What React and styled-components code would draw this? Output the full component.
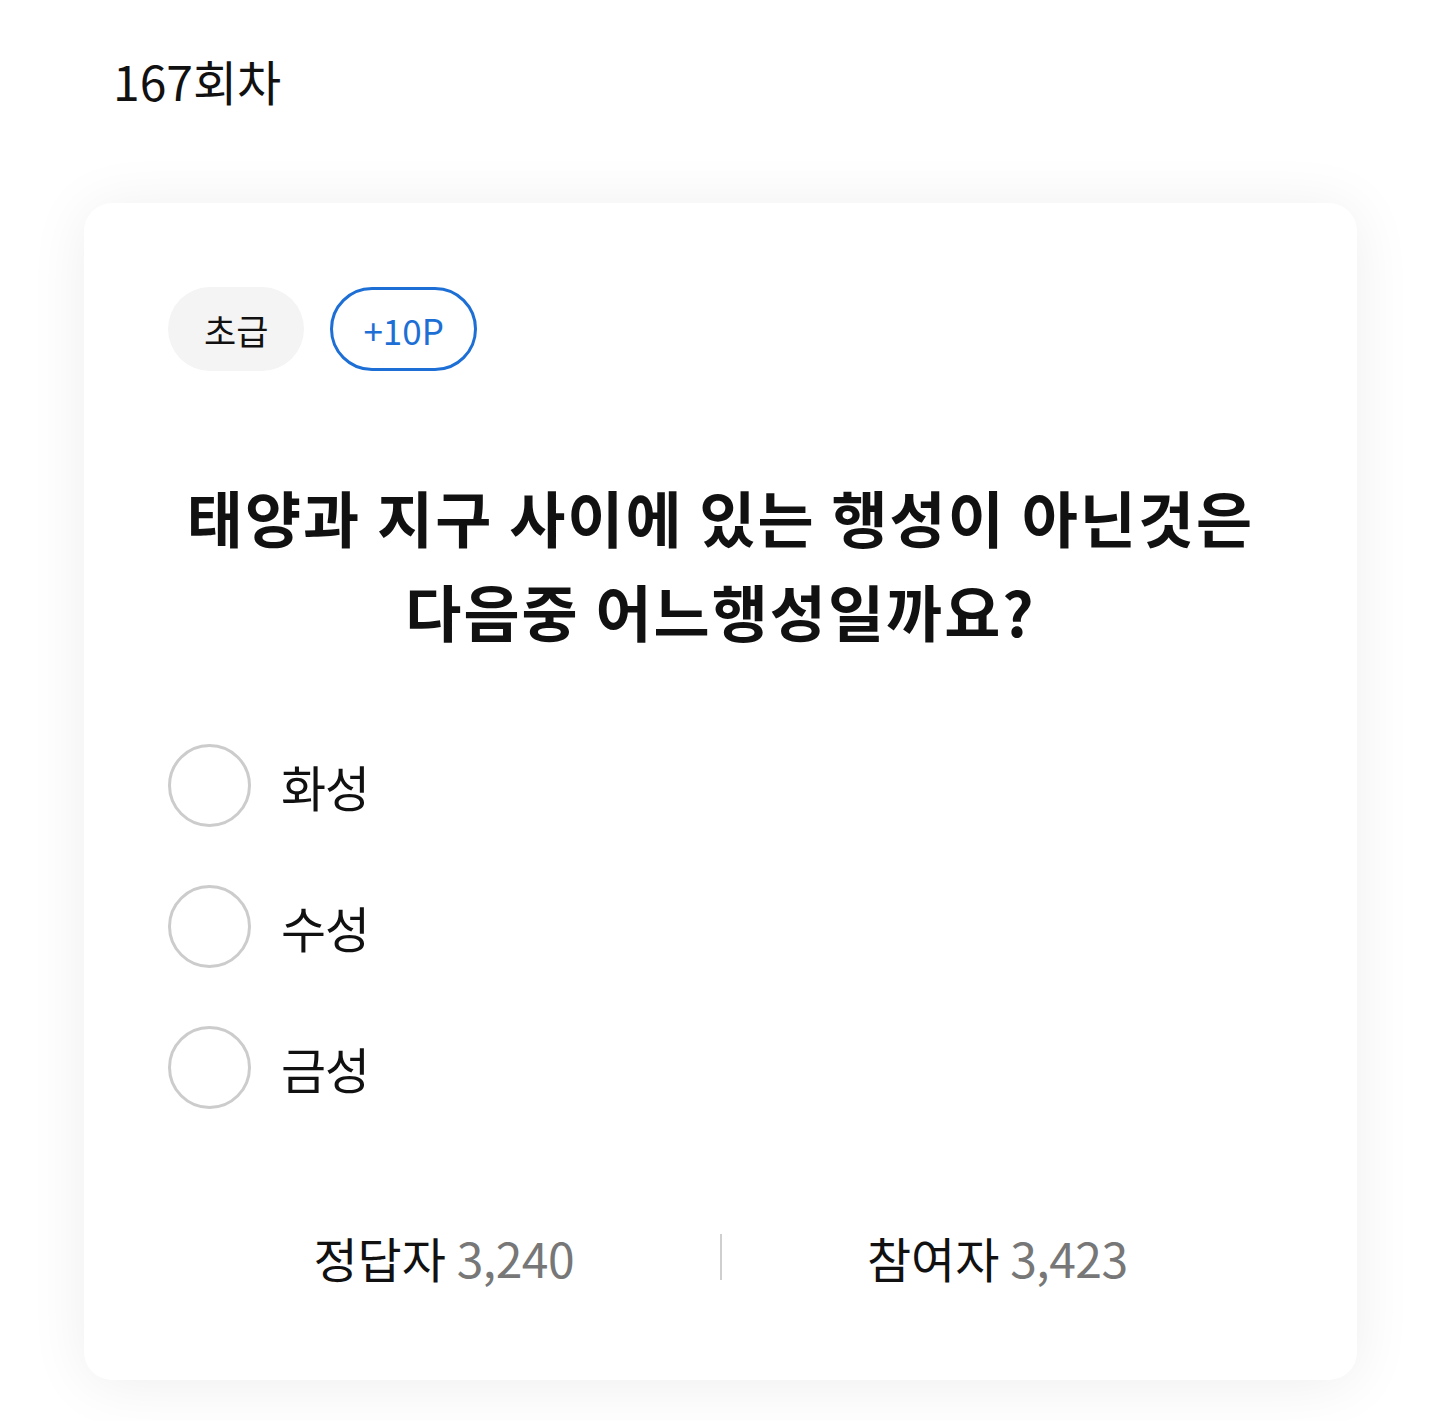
import React from 'react';
import styled, { createGlobalStyle } from 'styled-components';

const GlobalStyle = createGlobalStyle`
  html, body {
    margin: 0;
    padding: 0;
    background: #fff;
  }
  body {
    font-family: "Noto Sans CJK KR", "Noto Sans", sans-serif;
    color: #111;
  }
`;

const quiz = {
  round: '167회차',
  level: '초급',
  point: '+10P',
  question: ['태양과 지구 사이에 있는 행성이 아닌것은', '다음중 어느행성일까요?'],
  options: ['화성', '수성', '금성'],
  correct: '3,240',
  total: '3,423'
};

const App = () => (
  <>
    <GlobalStyle />
    <Page>
      <RoundTitle>{quiz.round}</RoundTitle>
      <Card>
        <BadgeRow>
          <Badge>{quiz.level}</Badge>
          <Badge outlined>{quiz.point}</Badge>
        </BadgeRow>
        <Question>
          {quiz.question.map((line) => (
            <span key={line}>{line}</span>
          ))}
        </Question>
        <OptionList>
          {quiz.options.map((opt) => (
            <Option key={opt}>
              <Radio />
              <OptionLabel>{opt}</OptionLabel>
            </Option>
          ))}
        </OptionList>
        <Stats>
          <Stat>
            정답자 <Count>{quiz.correct}</Count>
          </Stat>
          <Divider />
          <Stat>
            참여자 <Count>{quiz.total}</Count>
          </Stat>
        </Stats>
      </Card>
    </Page>
  </>
);

const Page = styled.div`
  padding: 47px 83px 41px 84px;
`;

const RoundTitle = styled.h1`
  margin: 0 0 90px 29px;
  font-size: 48px;
  font-weight: 400;
  line-height: 66px;
`;

const Card = styled.div`
  background: #fff;
  border-radius: 28px;
  box-shadow: 0 4px 60px rgba(0, 0, 0, 0.07);
  padding: 84px 84px 90px;
  display: flex;
  flex-direction: column;
`;

const BadgeRow = styled.div`
  display: flex;
  gap: 26px;
`;

const Badge = styled.span`
  box-sizing: border-box;
  height: 84px;
  padding: 0 ${(p) => (p.outlined ? '30px' : '36px')};
  border-radius: 42px;
  display: inline-flex;
  align-items: center;
  justify-content: center;
  font-size: 35px;
  background: ${(p) => (p.outlined ? '#fff' : '#f4f4f4')};
  color: ${(p) => (p.outlined ? '#1d6fd6' : '#111')};
  border: ${(p) => (p.outlined ? '3px solid #1d6fd6' : 'none')};
`;

const Question = styled.h2`
  margin: 99px 0 86px;
  display: flex;
  flex-direction: column;
  align-items: center;
  text-align: center;
  font-size: 61px;
  font-weight: 700;
  line-height: 94px;
  letter-spacing: 2px;
`;

const OptionList = styled.div`
  display: flex;
  flex-direction: column;
  gap: 58px;
`;

const Option = styled.label`
  display: flex;
  align-items: center;
  gap: 30px;
  cursor: pointer;
`;

const Radio = styled.span`
  box-sizing: border-box;
  width: 83px;
  height: 83px;
  border-radius: 50%;
  border: 3px solid #cccccc;
  background: #fff;
`;

const OptionLabel = styled.span`
  font-size: 49px;
  line-height: 66px;
  letter-spacing: -1px;
`;

const Stats = styled.div`
  margin-top: 115px;
  display: flex;
  align-items: center;
`;

const Stat = styled.div`
  flex: 1;
  text-align: center;
  font-size: 48px;
  line-height: 66px;
`;

const Count = styled.span`
  color: #777;
  letter-spacing: -0.5px;
`;

const Divider = styled.span`
  width: 2px;
  height: 46px;
  background: #cfcfcf;
`;

export default App;
